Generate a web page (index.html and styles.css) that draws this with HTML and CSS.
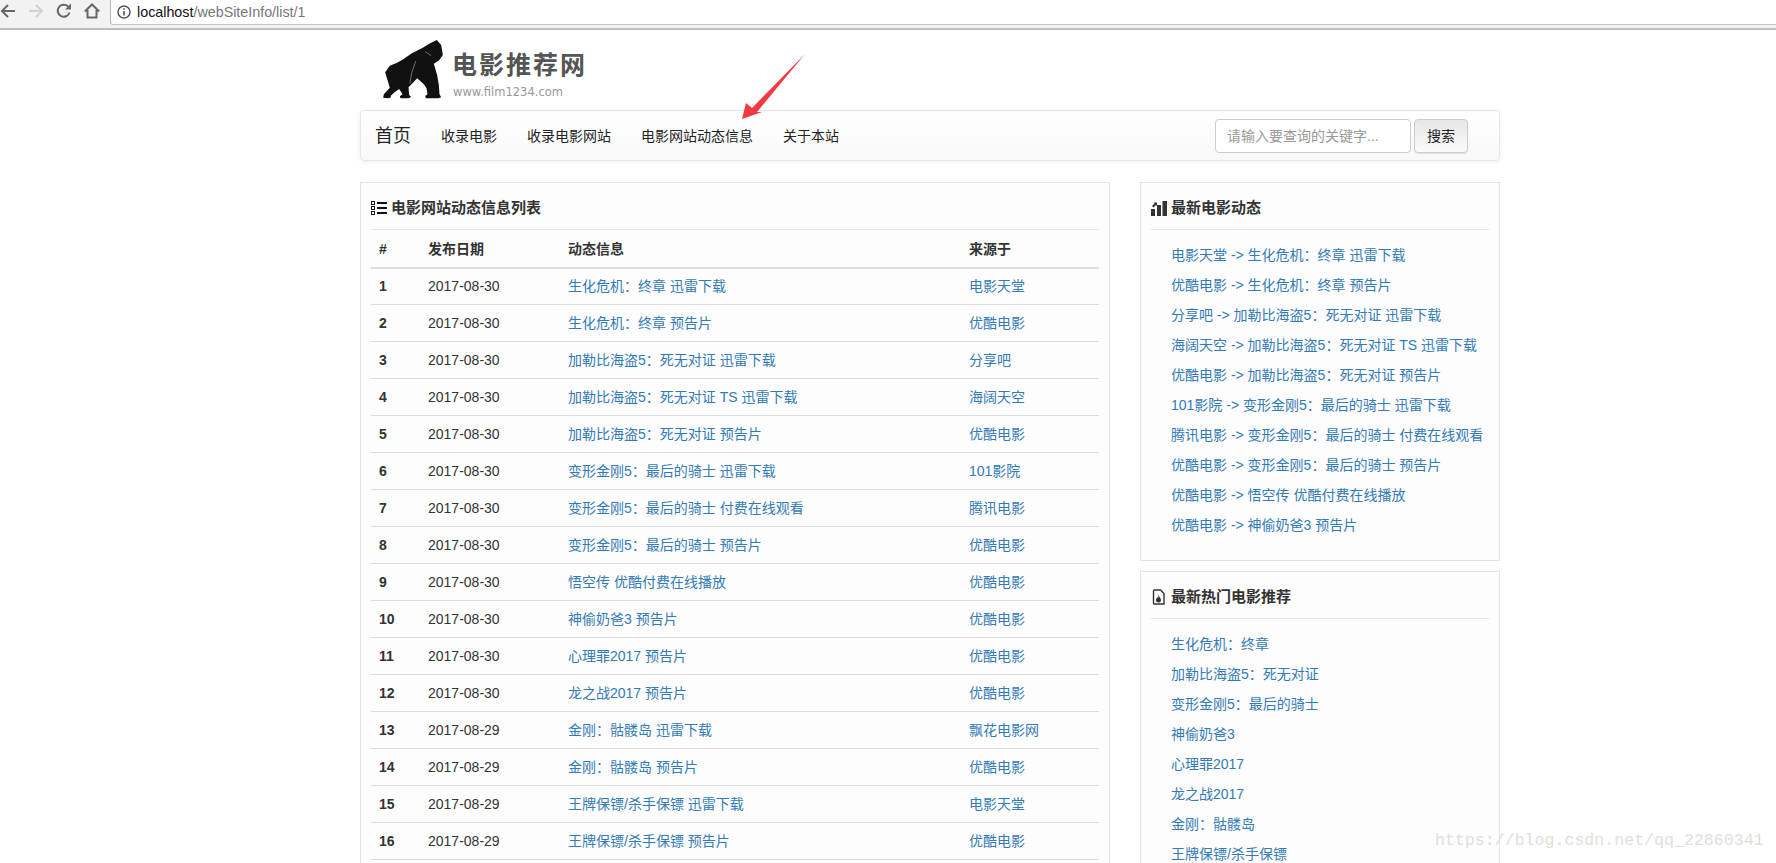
FILE: index.html
```html
<!DOCTYPE html>
<html lang="zh-CN">
<head>
<meta charset="utf-8">
<title>电影网站动态信息</title>
<link rel="stylesheet" href="styles.css">
</head>
<body>
<div class="chrome">
  <div class="chrome-btns">
    <svg class="cicon" viewBox="0 0 16 16" width="16" height="16"><path d="M15 8H2M8 2L2 8l6 6" fill="none" stroke="#666" stroke-width="2"/></svg>
    <svg class="cicon" viewBox="0 0 16 16" width="16" height="16"><path d="M1 8h13M8 2l6 6-6 6" fill="none" stroke="#d2d2d2" stroke-width="2"/></svg>
    <svg class="cicon" viewBox="0 0 16 16" width="16" height="16"><path d="M13.500 9.500A6 6 0 1 1 12 3.500" fill="none" stroke="#666" stroke-width="2"/><path d="M9 6.500h6V.5z" fill="#666"/></svg>
    <svg class="cicon" viewBox="0 0 16 16" width="16" height="16"><path d="M.8 8.500L8 1.500l7.200 7M3.500 7v7.500h9V7" fill="none" stroke="#666" stroke-width="2"/></svg>
  </div>
  <div class="omnibox">
    <svg viewBox="0 0 14 14" width="14" height="14"><circle cx="7" cy="7" r="6" fill="none" stroke="#555" stroke-width="1.500"/><path d="M7 6v4.500M7 3.300v1.500" stroke="#555" stroke-width="1.600"/></svg>
    <span class="url"><span class="host">localhost</span>/webSiteInfo/list/1</span>
  </div>
</div>

<div class="page">
  <header class="logo">
    <svg class="gorilla" viewBox="0 0 230 210" width="77" height="70">
      <path d="M165 25L185 15 198 30 203 60 192 76 176 86 186 120 191 150 193 178 198 187 190 190 152 190 150 183 157 178 154 160 146 148 126 130 112 145 100 157 102 180 108 186 100 190 76 190 74 184 82 178 72 162 58 172 46 183 48 187 40 190 24 188 26 178 44 158 36 132 30 112 44 92 64 84 82 74 110 55 140 40z" fill="#111"/>
      <path d="M122 78L110 112 104 146M150 50L168 62" fill="none" stroke="#fff" stroke-width="1.500" opacity=".8"/>
    </svg>
    <div class="logo-text">
      <span class="logo-title">电影推荐网</span>
      <span class="logo-url">www.film1234.com</span>
    </div>
  </header>

  <nav class="navbar">
    <a class="brand">首页</a>
    <ul class="nav-links">
      <li>收录电影</li>
      <li>收录电影网站</li>
      <li>电影网站动态信息</li>
      <li>关于本站</li>
    </ul>
    <form class="search">
      <input class="search-input" type="text" placeholder="请输入要查询的关键字...">
      <button class="search-btn" type="button">搜索</button>
    </form>
  </nav>

  <div class="columns">
    <main class="panel main-panel">
      <h4 class="panel-title">
        <svg viewBox="0 0 16 14" width="16" height="14"><path d="M0 0h4v4H0zm1 1v2h2V1zM0 5h4v4H0zm1 1v2h2V6zM0 10h4v4H0zm1 1v2h2v-2zM6 1h10v2H6zM6 6h10v2H6zM6 11h10v2H6z" fill="#111" fill-rule="evenodd"/></svg>
        电影网站动态信息列表
      </h4>
      <table class="info-table">
        <thead>
          <tr><th class="c-no">#</th><th class="c-date">发布日期</th><th class="c-info">动态信息</th><th>来源于</th></tr>
        </thead>
        <tbody>
          <tr><th>1</th><td>2017-08-30</td><td><a>生化危机：终章 迅雷下载</a></td><td><a>电影天堂</a></td></tr>
          <tr><th>2</th><td>2017-08-30</td><td><a>生化危机：终章 预告片</a></td><td><a>优酷电影</a></td></tr>
          <tr><th>3</th><td>2017-08-30</td><td><a>加勒比海盗5：死无对证 迅雷下载</a></td><td><a>分享吧</a></td></tr>
          <tr><th>4</th><td>2017-08-30</td><td><a>加勒比海盗5：死无对证 TS 迅雷下载</a></td><td><a>海阔天空</a></td></tr>
          <tr><th>5</th><td>2017-08-30</td><td><a>加勒比海盗5：死无对证 预告片</a></td><td><a>优酷电影</a></td></tr>
          <tr><th>6</th><td>2017-08-30</td><td><a>变形金刚5：最后的骑士 迅雷下载</a></td><td><a>101影院</a></td></tr>
          <tr><th>7</th><td>2017-08-30</td><td><a>变形金刚5：最后的骑士 付费在线观看</a></td><td><a>腾讯电影</a></td></tr>
          <tr><th>8</th><td>2017-08-30</td><td><a>变形金刚5：最后的骑士 预告片</a></td><td><a>优酷电影</a></td></tr>
          <tr><th>9</th><td>2017-08-30</td><td><a>悟空传 优酷付费在线播放</a></td><td><a>优酷电影</a></td></tr>
          <tr><th>10</th><td>2017-08-30</td><td><a>神偷奶爸3 预告片</a></td><td><a>优酷电影</a></td></tr>
          <tr><th>11</th><td>2017-08-30</td><td><a>心理罪2017 预告片</a></td><td><a>优酷电影</a></td></tr>
          <tr><th>12</th><td>2017-08-30</td><td><a>龙之战2017 预告片</a></td><td><a>优酷电影</a></td></tr>
          <tr><th>13</th><td>2017-08-29</td><td><a>金刚：骷髅岛 迅雷下载</a></td><td><a>飘花电影网</a></td></tr>
          <tr><th>14</th><td>2017-08-29</td><td><a>金刚：骷髅岛 预告片</a></td><td><a>优酷电影</a></td></tr>
          <tr><th>15</th><td>2017-08-29</td><td><a>王牌保镖/杀手保镖 迅雷下载</a></td><td><a>电影天堂</a></td></tr>
          <tr><th>16</th><td>2017-08-29</td><td><a>王牌保镖/杀手保镖 预告片</a></td><td><a>优酷电影</a></td></tr>
        </tbody>
      </table>
    </main>

    <aside class="side">
      <section class="panel">
        <h4 class="panel-title">
          <svg viewBox="0 0 16 15" width="16" height="15"><path d="M0 8h4v7H0zM6 4h4v11H6zM11.500 0H16v15h-4.500zM1 5l2.500-2.500L2.500 1.500H6V5L5 4 2.500 6.500z" fill="#333"/></svg>
          最新电影动态
        </h4>
        <ul class="link-list">
          <li>电影天堂 -&gt; 生化危机：终章 迅雷下载</li>
          <li>优酷电影 -&gt; 生化危机：终章 预告片</li>
          <li>分享吧 -&gt; 加勒比海盗5：死无对证 迅雷下载</li>
          <li>海阔天空 -&gt; 加勒比海盗5：死无对证 TS 迅雷下载</li>
          <li>优酷电影 -&gt; 加勒比海盗5：死无对证 预告片</li>
          <li>101影院 -&gt; 变形金刚5：最后的骑士 迅雷下载</li>
          <li>腾讯电影 -&gt; 变形金刚5：最后的骑士 付费在线观看</li>
          <li>优酷电影 -&gt; 变形金刚5：最后的骑士 预告片</li>
          <li>优酷电影 -&gt; 悟空传 优酷付费在线播放</li>
          <li>优酷电影 -&gt; 神偷奶爸3 预告片</li>
        </ul>
      </section>
      <section class="panel">
        <h4 class="panel-title">
          <svg viewBox="0 0 16 16" width="16" height="16"><path d="M3.500 1h6l3.500 3.500V15h-9.500a1 1 0 0 1-1-1V2a1 1 0 0 1 1-1z" fill="none" stroke="#333" stroke-width="1.400"/><path d="M7.500 6c.5 2 2.500 3 2.500 5a2.500 2.500 0 0 1-5 0c0-1.500 1-2 1.500-3 .3.500.500.800.800 1 .200-1 .200-2-.3-3z" fill="#333"/></svg>
          最新热门电影推荐
        </h4>
        <ul class="link-list">
          <li>生化危机：终章</li>
          <li>加勒比海盗5：死无对证</li>
          <li>变形金刚5：最后的骑士</li>
          <li>神偷奶爸3</li>
          <li>心理罪2017</li>
          <li>龙之战2017</li>
          <li>金刚：骷髅岛</li>
          <li>王牌保镖/杀手保镖</li>
        </ul>
      </section>
    </aside>
  </div>
</div>

<svg class="arrow" viewBox="0 0 70 70" width="70" height="70"><path d="M2 65L6 49 12 54 65 0 17 58 22 58z" fill="#f03a3f"/></svg>
<div class="watermark">https://blog.csdn.net/qq_22860341</div>
</body>
</html>
```
FILE: styles.css
```css
* { box-sizing: border-box; }
html, body { height: 863px; overflow: hidden; }
body {
  margin: 0;
  position: relative;
  background: #fff;
  color: #333;
  font: 14px/20px "Liberation Sans", "Noto Sans CJK SC", sans-serif;
}
a { color: #337ab7; text-decoration: none; }

.chrome {
  display: flex;
  height: 30px;
  background: #f2f2f2;
  border-bottom: 2px solid #bdbdbd;
}
.chrome-btns {
  width: 110px;
  display: flex;
  align-items: center;
  gap: 12px;
  padding: 0 0 6px 0;
}
.cicon { flex: none; }
.omnibox {
  flex: 1;
  height: 25px;
  background: #fff;
  border-left: 1px solid #b4b4b4;
  border-bottom: 1px solid #c4c4c4;
  border-bottom-left-radius: 3px;
  display: flex;
  align-items: center;
  gap: 6px;
  padding-left: 6px;
  font-size: 14.300px;
}
.url { color: #777; }
.host { color: #111; }

.page { width: 1140px; margin-left: 360px; }

.logo {
  height: 80px;
  display: flex;
  align-items: flex-start;
  padding: 5px 0 0 15px;
}
.gorilla { display: block; flex: none; }
.logo-text { display: flex; flex-direction: column; padding-top: 14px; }
.logo-title {
  font: 700 25px/28px "Noto Sans CJK SC", sans-serif;
  color: #555;
  letter-spacing: 2px;
}
.logo-url {
  margin-top: 8px;
  margin-left: 1px;
  font: 11.500px/14px "DejaVu Sans", sans-serif;
  color: #999;
}

.navbar {
  height: 51px;
  display: flex;
  align-items: center;
  padding: 0 31px 0 14px;
  border: 1px solid #e7e7e7;
  border-radius: 4px;
  background: linear-gradient(#fff, #f8f8f8);
  box-shadow: 0 1px 5px rgba(0, 0, 0, .075);
}
.brand { font-size: 18px; color: #222; }
.nav-links {
  display: flex;
  gap: 30px;
  margin: 0;
  padding: 0 0 0 30px;
  list-style: none;
  color: #222;
}
.search { display: flex; gap: 3px; margin-left: auto; }
.search-input {
  width: 196px;
  height: 34px;
  padding: 6px 11px;
  border: 1px solid #ccc;
  border-radius: 4px;
  font: inherit;
  color: #555;
}
.search-input::placeholder { color: #999; }
.search-btn {
  width: 54px;
  height: 34px;
  padding: 0;
  border: 1px solid #ccc;
  border-radius: 4px;
  background: linear-gradient(#e6e6e6, #fbfbfb);
  box-shadow: 0 1px 1px rgba(0, 0, 0, .1);
  font: inherit;
  color: #222;
}

.columns {
  display: flex;
  align-items: flex-start;
  gap: 30px;
  margin-top: 21px;
}
.panel {
  border: 1px solid #e3e3e3;
  background: #fdfdfd;
  padding: 0 10px 10px;
}
.main-panel { width: 750px; }
.side { width: 360px; display: flex; flex-direction: column; gap: 10px; }

.panel-title {
  height: 47px;
  margin: 0;
  padding-top: 4px;
  display: flex;
  align-items: center;
  gap: 4px;
  border-bottom: 1px solid #e5e5e5;
  font-size: 15px;
  font-weight: 700;
  color: #333;
}
.panel-title svg { flex: none; }

.info-table { width: 100%; border-collapse: separate; border-spacing: 0; table-layout: fixed; }
.info-table th, .info-table td {
  padding: 8px;
  height: 37px;
  text-align: left;
  border-top: 1px solid #ddd;
  font-size: 14px;
}
.info-table thead th { height: 39px; border-top: 0; border-bottom: 2px solid #ddd; }
.info-table tbody tr:first-child > * { border-top: 0; height: 35px; padding-top: 7px; padding-bottom: 8px; }
.info-table tbody tr:last-child > * { border-bottom: 1px solid #ddd; height: 38px; }
.c-no { width: 49px; }
.c-date { width: 140px; }
.c-info { width: 401px; }

.link-list {
  margin: 10px 0 10px;
  padding: 0 0 0 20px;
  list-style: none;
  color: #337ab7;
}
.link-list li { height: 30px; line-height: 30px; }

.arrow { position: absolute; left: 740px; top: 54px; }
.watermark {
  position: absolute;
  left: 1435px;
  top: 831px;
  font: 16.600px/20px "Liberation Mono", monospace;
  color: #e0e0da;
}
```
